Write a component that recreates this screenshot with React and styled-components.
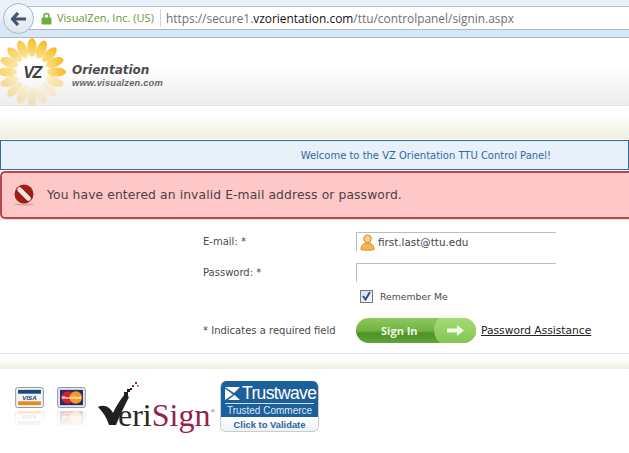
import React from 'react';
import styled, { createGlobalStyle } from 'styled-components';

const Global = createGlobalStyle`
  html, body { margin: 0; padding: 0; background: #fff; }
  body { width: 629px; height: 453px; overflow: hidden; font-family: "DejaVu Sans", sans-serif; }
`;

const Page = styled.div`
  width: 629px;
  height: 453px;
  display: flex;
  flex-direction: column;
  overflow: hidden;
`;

/* browser bar */
const Chrome = styled.div`
  height: 38px;
  box-sizing: border-box;
  flex: none;
  padding: 6px 0 0 3px;
  background: linear-gradient(#e9f1fb 0, #e9f1fb 18px, #d8e7f6 24px, #d8e7f6 100%);
  border-bottom: 1px solid #a9b9c9;
`;
const UrlBar = styled.div`
  position: relative;
  height: 24px;
  box-sizing: border-box;
  margin-left: 10px;
  padding-left: 27px;
  display: flex;
  align-items: center;
  background: #fff;
  border-top: 1px solid #b4c2d0;
  border-bottom: 1px solid #a9b9c9;
  font-family: "Open Sans", sans-serif;
  white-space: nowrap;
`;
const BackButton = styled.div`
  position: absolute;
  left: -10px;
  top: -4px;
  width: 31px;
  height: 31px;
  box-sizing: border-box;
  border-radius: 50%;
  border: 1px solid #a9b6c6;
  background: linear-gradient(#fbfcfe, #dfe6ee);
  display: flex;
  align-items: center;
  justify-content: center;
`;
const Lock = styled.svg`
  position: absolute;
  left: 28px;
  top: 5px;
`;
const Owner = styled.span`
  margin-left: 17px;
  color: #6b9a3a;
  font-size: 11.05px;
  padding-right: 6px;
  border-right: 1px solid #ccd3da;
  line-height: 18px;
`;
const Url = styled.span`
  margin-left: 5px;
  color: #6f6f6f;
  font-size: 11.9px;
`;
const Domain = styled.span`
  color: #111;
`;

/* site header */
const Header = styled.div`
  height: 67px;
  flex: none;
  display: flex;
  align-items: flex-start;
  background: linear-gradient(#fff 0, #fff 30px, #ececec 100%);
`;
const Brand = styled.div`
  margin: 25px 0 0 6px;
  display: flex;
  flex-direction: column;
  font-style: italic;
`;
const BrandName = styled.span`
  font-weight: 700;
  font-size: 12px;
  line-height: 15px;
  color: #4c4c4c;
`;
const BrandUrl = styled.span`
  font-family: "Liberation Sans", sans-serif;
  font-weight: 700;
  font-size: 9.3px;
  line-height: 11px;
  letter-spacing: 0.2px;
  color: #666;
`;

const CreamStrip = styled.div`
  height: ${p => p.$height}px;
  flex: none;
  box-sizing: border-box;
  border-top: 1px solid #e4e4e4;
  background: linear-gradient(#fff 0, #fff 25%, #f1efdf 100%);
`;

const WelcomeBar = styled.div`
  height: 30px;
  flex: none;
  box-sizing: border-box;
  margin-top: 1px;
  display: flex;
  align-items: center;
  justify-content: flex-end;
  padding-right: 77px;
  background: #e8f0f9;
  border: 1px solid #336b9e;
  font-size: 9.98px;
  color: #2e6aa6;
`;

const ErrorBar = styled.div`
  height: 48px;
  flex: none;
  box-sizing: border-box;
  margin-top: 1px;
  display: flex;
  align-items: center;
  gap: 13px;
  padding-left: 12px;
  background: #ffc8c8;
  border: 2px solid #b9484e;
  border-right: none;
  border-radius: 5px 0 0 5px;
  font-size: 12.3px;
  letter-spacing: 0.12px;
  color: #4b4044;
`;

/* form */
const Form = styled.div`
  height: 134px;
  flex: none;
  box-sizing: border-box;
  padding: 12px 0 0 203px;
  border-top: 1px solid #f3dede;
  display: grid;
  grid-template-columns: 153px 125px auto;
  grid-template-rows: 31px 23px 32px 26px;
  justify-content: start;
  font-size: 10px;
  color: #4a4a4a;
`;
const Label = styled.label`
  grid-column: 1;
  white-space: nowrap;
  line-height: 19px;
`;
const RequiredNote = styled.span`
  grid-column: 1;
  white-space: nowrap;
  line-height: 26px;
`;
const Field = styled.div`
  grid-column: 2 / 4;
  width: 200px;
  height: 19px;
  box-sizing: border-box;
  display: flex;
  align-items: center;
  gap: 3px;
  padding-left: 3px;
  border-top: 1px solid #bdbdbd;
  border-left: 1px solid #bdbdbd;
  color: #444;
  font-size: 10.4px;
`;
const Remember = styled.div`
  grid-column: 2 / 4;
  height: 20px;
  display: flex;
  align-items: center;
  gap: 7px;
  padding-left: 4px;
  font-size: 9.3px;
`;
const CheckBox = styled.span`
  width: 13px;
  height: 13px;
  box-sizing: border-box;
  border: 1px solid #777;
  background: linear-gradient(135deg, #d5daee, #fff);
  display: flex;
  align-items: center;
  justify-content: center;
`;
const SignIn = styled.div`
  position: relative;
  grid-column: 2;
  width: 120px;
  height: 25px;
  border-radius: 13px;
  overflow: hidden;
  display: flex;
  align-items: center;
  padding-left: 25px;
  box-sizing: border-box;
  background: linear-gradient(#8ec85e 0, #72b244 50%, #4d9324 62%, #61a638 100%);
  color: #eef8e2;
  font-family: "Open Sans", sans-serif;
  font-weight: 700;
  font-size: 11px;
`;
const SignInTip = styled.span`
  position: absolute;
  right: -6px;
  top: -8px;
  width: 48px;
  height: 40px;
  border-radius: 50%;
  background: linear-gradient(#aee27c, #8bc95c 70%, #7dbd50);
  display: flex;
  align-items: center;
  justify-content: center;
`;
const Assist = styled.a`
  grid-column: 3;
  line-height: 26px;
  color: #222;
  text-decoration: underline;
  font-size: 10.7px;
  white-space: nowrap;
`;

/* logos */
const Badges = styled.div`
  flex: 1;
  display: flex;
  align-items: flex-start;
  padding: 12px 0 0 15px;
`;
const CardWrap = styled.div`
  width: 29px;
  margin: 6px 13px 0 0;
  display: flex;
  flex-direction: column;
  gap: 3px;
`;
const Reflection = styled.div`
  height: 17px;
  overflow: hidden;
  transform: scaleY(-1);
  opacity: 0.22;
  -webkit-mask-image: linear-gradient(to top, #000, transparent);
  mask-image: linear-gradient(to top, #000, transparent);
`;
const VeriSign = styled.div`
  position: relative;
  width: 122px;
  height: 52px;
  margin-left: -1px;
  flex: none;
`;
const VeriText = styled.div`
  position: absolute;
  left: 20px;
  top: 13px;
  font-family: "Liberation Serif", serif;
  font-size: 32px;
  line-height: 34px;
  color: #2a2527;
  white-space: nowrap;
`;
const Sign = styled.span`
  color: #96204e;
`;
const Reg = styled.span`
  font-size: 6px;
  vertical-align: 13px;
  color: #96204e;
`;
const Trust = styled.div`
  width: 99px;
  height: 51px;
  flex: none;
  box-sizing: border-box;
  border-radius: 6px;
  overflow: hidden;
  display: flex;
  flex-direction: column;
  border: 1px solid #c4ccd4;
  border-top: none;
  font-family: "Liberation Sans", sans-serif;
`;
const TrustTop = styled.div`
  height: 36px;
  flex: none;
  box-sizing: border-box;
  background: #1d5f9b;
  color: #fff;
  display: flex;
  flex-direction: column;
  margin: 0 -1px;
  padding: 4px 5px 0;
`;
const TrustName = styled.div`
  display: flex;
  align-items: center;
  gap: 1px;
  font-size: 17.5px;
  line-height: 16px;
  letter-spacing: -0.65px;
  padding-bottom: 2px;
  border-bottom: 1px solid #cfe0ef;
`;
const TrustSub = styled.div`
  font-size: 10px;
  line-height: 13px;
  text-align: center;
  white-space: nowrap;
  color: #dce9f5;
`;
const TrustLink = styled.div`
  flex: 1;
  text-align: center;
  font-size: 9.4px;
  font-weight: 700;
  line-height: 15px;
  color: #2c6298;
  background: linear-gradient(#fff, #eef1f4);
`;

const petals = [
  { a: 0, o: 1 }, { a: 22.5, o: 1 }, { a: 45, o: 1 }, { a: 67.5, o: 1 }, { a: 90, o: 1 },
  { a: 112.5, o: 0.45 }, { a: 135, o: 0.2 }, { a: 157.5, o: 0.2 }, { a: 180, o: 0.3 },
  { a: 202.5, o: 0.3 }, { a: 225, o: 0.4 }, { a: 247.5, o: 0.5 }, { a: 270, o: 0.7 },
  { a: 292.5, o: 0.7 }, { a: 315, o: 0.8 }, { a: 337.5, o: 0.85 },
];

const Flower = () => (
  <svg width="66" height="68" viewBox="0 0 66 68" style={{ flex: 'none' }}>
    <defs>
      <linearGradient id="petal" x1="0" y1="0" x2="0" y2="1">
        <stop offset="0" stopColor="#f8bb22" />
        <stop offset="1" stopColor="#fbe08e" />
      </linearGradient>
    </defs>
    {petals.map(p => (
      <ellipse
        key={p.a}
        cx="32"
        cy="9.5"
        rx="4.6"
        ry="9.5"
        fill="url(#petal)"
        opacity={p.o}
        transform={`rotate(${p.a} 32 34)`}
      />
    ))}
    <text
      x="32"
      y="40"
      textAnchor="middle"
      fontFamily="Liberation Sans, sans-serif"
      fontSize="16"
      fontWeight="700"
      fontStyle="italic"
      letterSpacing="-1.5"
      fill="#3f3f3f"
    >
      VZ
    </text>
  </svg>
);

const StopIcon = () => (
  <svg width="20" height="22" viewBox="0 0 20 22">
    <ellipse cx="10" cy="20.5" rx="10" ry="1.1" fill="#d9a3a3" />
    <circle cx="10" cy="10" r="9.5" fill="#9c1f14" />
    <path d="M5.5 5.5 L14.5 14.5" stroke="#f3e3e3" strokeWidth="4.6" strokeLinecap="round" />
  </svg>
);

const UserIcon = () => (
  <svg width="15" height="17" viewBox="0 0 15 17">
    <circle cx="7.5" cy="4.8" r="3.8" fill="#fbd08a" stroke="#d98a1f" />
    <path d="M1 15.5 C1 11 4 9 7.5 9 C11 9 14 11 14 15.5 C11 16.5 4 16.5 1 15.5 Z" fill="#f7b552" stroke="#d98a1f" />
  </svg>
);

const VisaCard = () => (
  <svg width="29" height="21" viewBox="0 0 30 22" style={{ display: 'block' }}>
    <rect x="0.5" y="0.5" width="29" height="21" rx="2" fill="#f3f5f8" stroke="#8e9297" />
    <rect x="3" y="3" width="24" height="4" fill="#164a7c" />
    <rect x="3" y="15" width="24" height="4" fill="#ea8a1d" />
    <text x="15" y="13.5" textAnchor="middle" fontFamily="Liberation Sans, sans-serif" fontSize="6.5" fontWeight="700" fontStyle="italic" fill="#1c3f75">
      VISA
    </text>
  </svg>
);

const MasterCard = () => (
  <svg width="29" height="21" viewBox="0 0 30 22" style={{ display: 'block' }}>
    <rect x="0.5" y="0.5" width="29" height="21" rx="2" fill="#e4e6ee" stroke="#8e9297" />
    <rect x="3" y="3" width="24" height="16" fill="#232a6a" />
    <circle cx="11" cy="11" r="6.5" fill="#d2232a" />
    <circle cx="19.5" cy="11" r="6.5" fill="#f29b26" />
    <text x="15" y="12.5" textAnchor="middle" fontFamily="Liberation Sans, sans-serif" fontSize="3.6" fontWeight="700" fill="#fff">
      MasterCard
    </text>
  </svg>
);

export default function App() {
  return (
    <Page>
      <Global />
      <Chrome>
        <UrlBar>
          <BackButton>
            <svg width="16" height="14" viewBox="0 0 16 14">
              <path d="M7 1 L1.5 7 L7 13 M2 7 H15" fill="none" stroke="#46566a" strokeWidth="3.2" />
            </svg>
          </BackButton>
          <Lock width="11" height="13" viewBox="0 0 11 13">
            <path d="M3 6 V4 a2.5 2.5 0 0 1 5 0 V6" fill="none" stroke="#6fae3c" strokeWidth="1.6" />
            <rect x="0.5" y="5.5" width="10" height="7" rx="1" fill="#6fae3c" />
          </Lock>
          <Owner>VisualZen, Inc. (US)</Owner>
          <Url>
            https://secure1.<Domain>vzorientation.com</Domain>/ttu/controlpanel/signin.aspx
          </Url>
        </UrlBar>
      </Chrome>

      <Header>
        <Flower />
        <Brand>
          <BrandName>Orientation</BrandName>
          <BrandUrl>www.visualzen.com</BrandUrl>
        </Brand>
      </Header>

      <CreamStrip $height={34} />
      <WelcomeBar>Welcome to the VZ Orientation TTU Control Panel!</WelcomeBar>
      <ErrorBar>
        <StopIcon />
        You have entered an invalid E-mail address or password.
      </ErrorBar>

      <Form>
        <Label>E-mail: *</Label>
        <Field>
          <UserIcon />
          first.last@ttu.edu
        </Field>
        <Label>Password: *</Label>
        <Field />
        <Remember>
          <CheckBox>
            <svg width="9" height="10" viewBox="0 0 9 10">
              <path d="M1 5 L3.5 8.5 L8 1" fill="none" stroke="#2f4f92" strokeWidth="2" />
            </svg>
          </CheckBox>
          Remember Me
        </Remember>
        <RequiredNote>* Indicates a required field</RequiredNote>
        <SignIn>
          Sign In
          <SignInTip>
            <svg width="17" height="11" viewBox="0 0 17 11" style={{ marginRight: 6 }}>
              <path d="M0 3.5 H10 V0 L17 5.5 L10 11 V7.5 H0 Z" fill="#f4fbe9" />
            </svg>
          </SignInTip>
        </SignIn>
        <Assist>Password Assistance</Assist>
      </Form>

      <CreamStrip $height={16} />

      <Badges>
        <CardWrap>
          <VisaCard />
          <Reflection><VisaCard /></Reflection>
        </CardWrap>
        <CardWrap>
          <MasterCard />
          <Reflection><MasterCard /></Reflection>
        </CardWrap>
        <VeriSign>
          <svg width="42" height="46" viewBox="0 0 42 46">
            <path d="M0 26 C6 23 12 26 15 32 C18 25 22 19 27 13 L31 16 C26 26 21 36 18 44 L11 44 C9 37 5 31 0 26 Z" fill="#221f20" />
            <g fill="#221f20">
              <rect x="26" y="11" width="4" height="4" />
              <rect x="29" y="8" width="3" height="3" />
              <rect x="32" y="7" width="2" height="2" />
            </g>
            <g fill="#96204e">
              <rect x="34" y="4" width="2" height="2" />
              <rect x="37" y="1" width="2" height="2" />
              <rect x="39" y="4" width="1.5" height="1.5" />
            </g>
          </svg>
          <VeriText>
            eri<Sign>Sign</Sign><Reg>®</Reg>
          </VeriText>
        </VeriSign>
        <Trust>
          <TrustTop>
            <TrustName>
              <svg width="16" height="13" viewBox="0 0 16 13" style={{ flex: 'none' }}>
                <path d="M0 0 H15 L9 6 Z M0 1.5 L8 7.5 L0 13 Z M9.5 8 L15 13 H3 Z" fill="#fff" />
              </svg>
              Trustwave
            </TrustName>
            <TrustSub>Trusted Commerce</TrustSub>
          </TrustTop>
          <TrustLink>Click to Validate</TrustLink>
        </Trust>
      </Badges>
    </Page>
  );
}
